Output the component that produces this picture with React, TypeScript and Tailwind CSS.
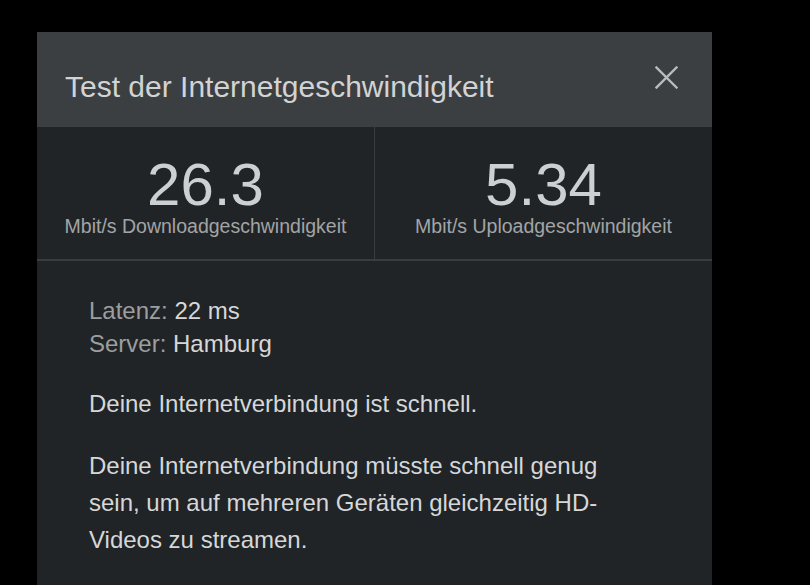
import React from "react";

export default function App() {
  return (
    <div className="w-[810px] h-[585px] bg-black overflow-hidden" style={{ fontFamily: '"Liberation Sans", Arial, sans-serif' }}>
      <div className="ml-[37px] mt-[32px] w-[675px] h-[553px] bg-[#202426] flex flex-col">
        <div className="h-[95px] bg-[#3c3f41] flex items-center justify-between pl-[28px] pr-[34px]">
          <div className="text-[30px] text-[#d2d3d4] pt-[14px]">Test der Internetgeschwindigkeit</div>
          <svg width="23" height="23" viewBox="0 0 23 23" className="mb-[4px]">
            <path d="M1.5 1.5 L21.5 21.5 M21.5 1.5 L1.5 21.5" stroke="#b9bbbd" strokeWidth="2.4" strokeLinecap="square" />
          </svg>
        </div>
        <div className="flex h-[134px] border-b-2 border-[#3a3d3f]">
          <div className="flex-1 flex flex-col items-center pt-[26px] border-r border-[#3a3d3f]">
            <div className="text-[60px] leading-[64px] text-[#cdcfd1]">26.3</div>
            <div className="text-[19.5px] text-[#a2a4a6] -mt-[5px]">Mbit/s Downloadgeschwindigkeit</div>
          </div>
          <div className="flex-1 flex flex-col items-center pt-[26px]">
            <div className="text-[60px] leading-[64px] text-[#cdcfd1]">5.34</div>
            <div className="text-[19.5px] text-[#a2a4a6] -mt-[5px]">Mbit/s Uploadgeschwindigkeit</div>
          </div>
        </div>
        <div className="pl-[52px] pt-[33px] text-[24px] text-[#d6d7d8] w-[575px]">
          <div className="leading-[33px]"><span className="text-[#9c9ea0]">Latenz:</span> 22 ms</div>
          <div className="leading-[33px]"><span className="text-[#9c9ea0]">Server:</span> Hamburg</div>
          <p className="mt-[25px] leading-[37px]">Deine Internetverbindung ist schnell.</p>
          <p className="mt-[25px] leading-[37px]">Deine Internetverbindung müsste schnell genug sein, um auf mehreren Geräten gleichzeitig HD-Videos zu streamen.</p>
        </div>
      </div>
    </div>
  );
}
